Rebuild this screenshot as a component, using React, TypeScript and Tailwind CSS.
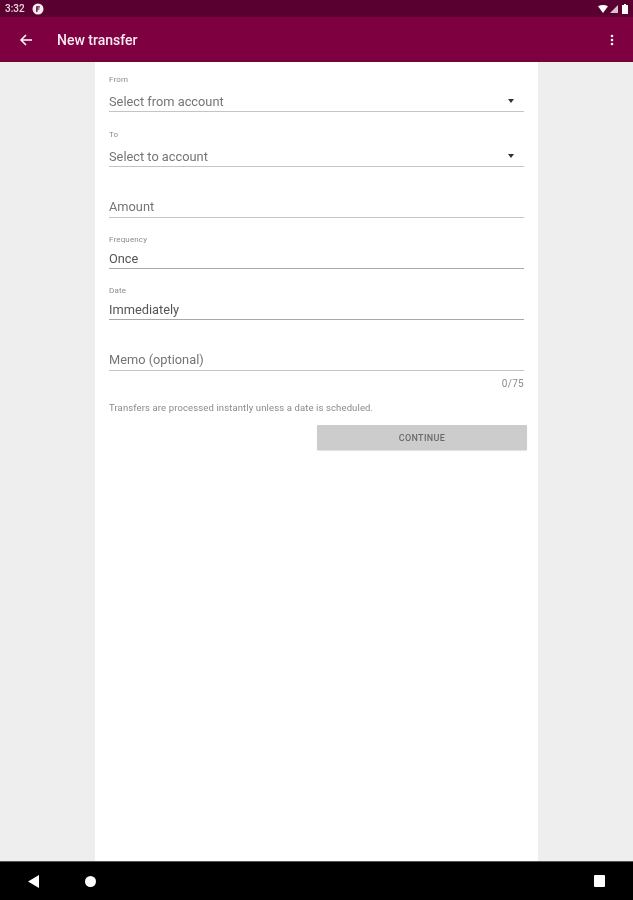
const font = { fontFamily: '"Roboto", "Liberation Sans", sans-serif' };

function Field({
  label,
  value,
  dark,
  arrow,
  h,
}: {
  label?: string;
  value: string;
  dark?: boolean;
  arrow?: boolean;
  h: string;
}) {
  return (
    <div className={`flex flex-col justify-end ${h}`}>
      {label && (
        <div className={`text-[8px] leading-[10px] tracking-[0.15px] text-[#8a8a8a] ${dark ? "mb-[6px]" : "mb-[9px]"}`}>
          {label}
        </div>
      )}
      <div className={`flex items-start justify-between pr-[10px] ${label ? "h-[17px]" : "h-[18px]"}`}>
        <span className={`text-[12.8px] leading-[15px] ${dark ? "text-[#555555]" : "text-[#757575]"}`}>{value}</span>
        {arrow && (
          <svg width="6" height="4" viewBox="0 0 6 4" className="mt-[5px]">
            <path d="M0 0h6L3 4z" fill="#333333" />
          </svg>
        )}
      </div>
      <div className={`h-[1.5px] ${dark ? "bg-[#a8a8a8]" : "bg-[#c4c4c4]"}`} />
    </div>
  );
}

export default function App() {
  return (
    <div className="w-[633px] h-[900px] flex flex-col overflow-hidden bg-[#eeeeee] blur-[0.6px]" style={font}>
      <div className="h-[17px] shrink-0 bg-[#590030] flex items-center justify-between pl-[5px] pr-[5px]">
        <div className="flex items-center gap-[7px]">
          <span className="text-[10px] font-medium text-[#e8d8e0] leading-none">3:32</span>
          <svg width="12" height="12" viewBox="0 0 12 12">
            <circle cx="6" cy="6" r="5.5" fill="#f5edf1" />
            <path d="M4.2 9V3.2h3.6v1.2H5.5v1h1.9v1.1H5.5V9z" fill="#590030" />
          </svg>
        </div>
        <div className="flex items-center gap-[2px]">
          <svg width="10" height="8" viewBox="0 0 10 8">
            <path d="M0 1.2C3 -.4 7 -.4 10 1.2L5 8z" fill="#ffffff" />
          </svg>
          <svg width="8" height="8" viewBox="0 0 8 8">
            <path d="M8 0v8H0z" fill="#d8c4ce" />
          </svg>
          <svg width="6" height="10" viewBox="0 0 6 10" className="ml-[2px]">
            <path d="M2 0h2v1h2v9H0V1h2z" fill="#ffffff" />
          </svg>
        </div>
      </div>
      <div className="h-[45px] shrink-0 bg-[#7f0040] border-b border-[#6a0c1e] pt-[1px] flex items-center">
        <svg width="14" height="14" viewBox="0 0 14 14" className="ml-[19px]" fill="none" stroke="#ffffff" strokeWidth="1.5">
          <path d="M13 7H2M7 2 2 7l5 5" />
        </svg>
        <span className="ml-[24px] mt-[1px] text-[14px] font-medium text-[#f6eaf0]">New transfer</span>
        <svg width="4" height="12" viewBox="0 0 4 12" className="ml-auto mr-[19px]">
          <circle cx="2" cy="2" r="1.3" fill="#ffffff" />
          <circle cx="2" cy="6" r="1.3" fill="#ffffff" />
          <circle cx="2" cy="10" r="1.3" fill="#ffffff" />
        </svg>
      </div>
      <div className="flex-1 flex justify-center">
        <div className="w-[443px] bg-white pl-[14px] pr-[11px]">
          <div className="w-[415px]">
            <Field h="h-[50px]" label="From" value="Select from account" arrow />
            <Field h="h-[55px]" label="To" value="Select to account" arrow />
            <Field h="h-[51px]" value="Amount" />
            <Field h="h-[51px]" label="Frequency" value="Once" dark />
            <Field h="h-[51px]" label="Date" value="Immediately" dark />
            <Field h="h-[51px]" value="Memo (optional)" />
            <div className="mt-[7px] text-right text-[10px] leading-[12px] text-[#8a8a8a] tracking-[0.3px]">0/75</div>
            <div className="mt-[12px] text-[9.5px] leading-[12px] text-[#8a8a8a] tracking-[0.12px]">
              Transfers are processed instantly unless a date is scheduled.
            </div>
          </div>
          <div className="flex justify-end mt-[11px]">
            <div className="w-[210px] h-[25px] pt-[2px] rounded-[1px] bg-[#cccccc] shadow-[0_1px_1px_rgba(0,0,0,0.12)] flex items-center justify-center text-[9px] font-medium text-[#6a6a6a] tracking-[0.35px]">
              CONTINUE
            </div>
          </div>
        </div>
      </div>
      <div className="h-[39px] shrink-0 bg-black border-t border-[#555555] flex items-center">
        <svg width="11" height="13" viewBox="0 0 11 13" className="ml-[28px]">
          <path d="M11 0v13L0 6.5z" fill="#ffffff" />
        </svg>
        <div className="ml-[46px] w-[11px] h-[11px] rounded-full bg-white" />
        <div className="ml-auto mr-[28px] w-[11px] h-[12px] rounded-[1px] bg-white" />
      </div>
    </div>
  );
}
